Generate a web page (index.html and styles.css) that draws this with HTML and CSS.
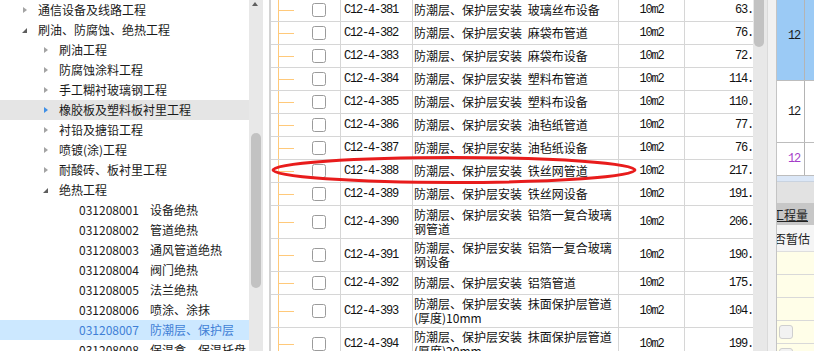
FILE: index.html
```html
<!DOCTYPE html>
<html lang="zh-CN">
  <head>
    <meta charset="UTF-8" />
    <meta name="viewport" content="width=device-width, initial-scale=1.0" />
    <title>定额选择</title>
    <link rel="stylesheet" href="styles.css">
  </head>
  <body>
    <div class="app">
      <!-- arbre des chapitres -->
      <div class="tree">
        <div class="node l1"><span class="ab"><i class="arr shut"></i></span><span>通信设备及线路工程</span></div>
        <div class="node l1"><span class="ab"><i class="arr open"></i></span><span>刷油、防腐蚀、绝热工程</span></div>
        <div class="node l2"><span class="ab"><i class="arr shut"></i></span><span>刷油工程</span></div>
        <div class="node l2"><span class="ab"><i class="arr shut"></i></span><span>防腐蚀涂料工程</span></div>
        <div class="node l2"><span class="ab"><i class="arr shut"></i></span><span>手工糊衬玻璃钢工程</span></div>
        <div class="node l2 hover"><span class="ab"><i class="arr shut"></i></span><span>橡胶板及塑料板衬里工程</span></div>
        <div class="node l2"><span class="ab"><i class="arr shut"></i></span><span>衬铅及搪铅工程</span></div>
        <div class="node l2"><span class="ab"><i class="arr shut"></i></span><span>喷镀(涂)工程</span></div>
        <div class="node l2"><span class="ab"><i class="arr shut"></i></span><span>耐酸砖、板衬里工程</span></div>
        <div class="node l2"><span class="ab"><i class="arr open"></i></span><span>绝热工程</span></div>
        <div class="node l3"><span class="code">031208001</span><span>设备绝热</span></div>
        <div class="node l3"><span class="code">031208002</span><span>管道绝热</span></div>
        <div class="node l3"><span class="code">031208003</span><span>通风管道绝热</span></div>
        <div class="node l3"><span class="code">031208004</span><span>阀门绝热</span></div>
        <div class="node l3"><span class="code">031208005</span><span>法兰绝热</span></div>
        <div class="node l3"><span class="code">031208006</span><span>喷涂、涂抹</span></div>
        <div class="node l3 sel"><span class="code">031208007</span><span>防潮层、保护层</span></div>
        <div class="node l3"><span class="code">031208008</span><span>保温盒、保温托盘</span></div>
      </div>
      <div class="vscroll">
        <i class="up"></i>
        <i class="thumb"></i>
      </div>
      <div class="gap"></div>

      <!-- liste des sous-articles -->
      <div class="grid">
        <div class="rows">
          <div class="row"><div class="c c1"><i class="stub"></i><i class="chk"></i></div><div class="c c2">C12-4-381</div><div class="c c3">防潮层、保护层安装 玻璃丝布设备</div><div class="c c4">10m2</div><div class="c c5">63.28</div></div>
          <div class="row"><div class="c c1"><i class="stub"></i><i class="chk"></i></div><div class="c c2">C12-4-382</div><div class="c c3">防潮层、保护层安装 麻袋布管道</div><div class="c c4">10m2</div><div class="c c5">76.14</div></div>
          <div class="row"><div class="c c1"><i class="stub"></i><i class="chk"></i></div><div class="c c2">C12-4-383</div><div class="c c3">防潮层、保护层安装 麻袋布设备</div><div class="c c4">10m2</div><div class="c c5">72.06</div></div>
          <div class="row"><div class="c c1"><i class="stub"></i><i class="chk"></i></div><div class="c c2">C12-4-384</div><div class="c c3">防潮层、保护层安装 塑料布管道</div><div class="c c4">10m2</div><div class="c c5">114.23</div></div>
          <div class="row"><div class="c c1"><i class="stub"></i><i class="chk"></i></div><div class="c c2">C12-4-385</div><div class="c c3">防潮层、保护层安装 塑料布设备</div><div class="c c4">10m2</div><div class="c c5">110.17</div></div>
          <div class="row"><div class="c c1"><i class="stub"></i><i class="chk"></i></div><div class="c c2">C12-4-386</div><div class="c c3">防潮层、保护层安装 油毡纸管道</div><div class="c c4">10m2</div><div class="c c5">77.12</div></div>
          <div class="row"><div class="c c1"><i class="stub"></i><i class="chk"></i></div><div class="c c2">C12-4-387</div><div class="c c3">防潮层、保护层安装 油毡纸设备</div><div class="c c4">10m2</div><div class="c c5">76.05</div></div>
          <div class="row"><div class="c c1"><i class="stub"></i><i class="chk"></i></div><div class="c c2">C12-4-388</div><div class="c c3">防潮层、保护层安装 铁丝网管道</div><div class="c c4">10m2</div><div class="c c5">217.11</div></div>
          <div class="row"><div class="c c1"><i class="stub"></i><i class="chk"></i></div><div class="c c2">C12-4-389</div><div class="c c3">防潮层、保护层安装 铁丝网设备</div><div class="c c4">10m2</div><div class="c c5">191.59</div></div>
          <div class="row"><div class="c c1"><i class="stub"></i><i class="chk"></i></div><div class="c c2">C12-4-390</div><div class="c c3">防潮层、保护层安装 铝箔一复合玻璃钢管道</div><div class="c c4">10m2</div><div class="c c5">206.32</div></div>
          <div class="row"><div class="c c1"><i class="stub"></i><i class="chk"></i></div><div class="c c2">C12-4-391</div><div class="c c3">防潮层、保护层安装 铝箔一复合玻璃钢设备</div><div class="c c4">10m2</div><div class="c c5">190.06</div></div>
          <div class="row"><div class="c c1"><i class="stub"></i><i class="chk"></i></div><div class="c c2">C12-4-392</div><div class="c c3">防潮层、保护层安装 铝箔管道</div><div class="c c4">10m2</div><div class="c c5">175.31</div></div>
          <div class="row"><div class="c c1"><i class="stub"></i><i class="chk"></i></div><div class="c c2">C12-4-393</div><div class="c c3">防潮层、保护层安装 抹面保护层管道(厚度)10mm</div><div class="c c4">10m2</div><div class="c c5">104.32</div></div>
          <div class="row"><div class="c c1"><i class="stub"></i><i class="chk"></i></div><div class="c c2">C12-4-394</div><div class="c c3">防潮层、保护层安装 抹面保护层管道(厚度)20mm</div><div class="c c4">10m2</div><div class="c c5">199.06</div></div>
        </div>
      </div>
      <div class="vscroll2">
        <i class="thumb2"></i>
      </div>
      <div class="splitter"></div>

      <!-- panneau de droite -->
      <div class="side">
        <div class="s blue"><span class="v">12</span><span class="w"></span></div>
        <div class="s white"><span class="v">12</span><span class="w"></span></div>
        <div class="s mid"><span class="v purple">12</span><span class="w"></span></div>
        <div class="s strip"></div>
        <div class="s bar"></div>
        <div class="s head">工程量</div>
        <div class="s sub">否暂估</div>
        <div class="s yel"></div>
        <div class="s yel"></div>
        <div class="s yel"></div>
        <div class="s yel"><i class="chk2"></i></div>
        <div class="s yel"><i class="chk2"></i></div>
      </div>

      <!-- annotation -->
      <svg class="mark" width="814" height="351" viewBox="0 0 814 351">
        <ellipse cx="454" cy="170" rx="181" ry="12.5" fill="none" stroke="#e81c1c" stroke-width="3" />
      </svg>
    </div>
  </body>
</html>
```

FILE: styles.css
```css
body {
  margin: 0;
  overflow: hidden;
  background: #fff;
}
.app {
  position: relative;
  display: flex;
  width: 814px;
  height: 351px;
  overflow: hidden;
  font-family: "Noto Sans CJK SC", sans-serif;
  font-size: 12px;
  color: #1a1a1a;
}

/* arbre */
.tree {
  width: 249px;
  flex: none;
  overflow: hidden;
}
.node {
  display: flex;
  align-items: center;
  height: 20px;
  line-height: 20px;
  white-space: nowrap;
}
.l1 {
  padding-left: 22px;
}
.l2 {
  padding-left: 43px;
}
.l3 {
  padding-left: 79px;
}
.ab {
  display: flex;
  align-items: center;
  width: 16px;
  height: 20px;
}
.arr.shut {
  width: 0;
  height: 0;
  margin-left: 1px;
  border-left: 4px solid #a3a3a3;
  border-top: 3.5px solid transparent;
  border-bottom: 3.5px solid transparent;
}
.arr.open {
  width: 0;
  height: 0;
  margin-top: 1px;
  border-bottom: 5px solid #5e5e5e;
  border-left: 5px solid transparent;
}
.hover {
  background: #e5e5e5;
}
.hover .arr.shut {
  border-left-color: #3f8fe6;
}
.code {
  width: 71px;
}
.sel {
  background: #cce8ff;
  color: #3f7fd6;
}
.vscroll {
  width: 14px;
  flex: none;
  display: flex;
  flex-direction: column;
  background: #e8e8e8;
}
.up {
  width: 0;
  height: 0;
  margin: 2px 0 0 3px;
  border-bottom: 4px solid #5f5f5f;
  border-left: 3.5px solid transparent;
  border-right: 3.5px solid transparent;
}
.thumb {
  width: 10px;
  height: 155px;
  margin: 127px 0 0 2px;
  border-radius: 5px;
  background: #c2c2c2;
}
.gap {
  width: 6px;
  flex: none;
}

/* tableau */
.grid {
  width: 482px;
  flex: none;
  overflow: hidden;
  border-left: 2px solid #d3d3d3;
}
.rows {
  width: 500px;
  margin-top: -1px;
  background: linear-gradient(#ffc97a, #ffc97a) no-repeat 7px 0 / 1px 100%;
}
.row {
  display: grid;
  grid-template-columns: 70px 72px 206px 66px 86px;
  min-height: 22px;
  border-bottom: 1px solid #d6d6d6;
}
.c {
  box-sizing: border-box;
  display: flex;
  align-items: center;
  border-right: 1px solid #d6d6d6;
  white-space: nowrap;
}
.stub {
  width: 16px;
  height: 1px;
  margin-left: 7px;
  background: #ffc97a;
}
.chk {
  box-sizing: border-box;
  width: 14px;
  height: 14px;
  margin-left: 18px;
  border: 1.5px solid #9b9b9b;
  border-radius: 2.5px;
  background: #fff;
}
.c2,
.c4,
.c5 {
  font-family: "Liberation Mono", monospace;
  font-size: 12px;
  letter-spacing: -1.2px;
  color: #111;
}
.c2 {
  padding-left: 3px;
}
.c3 {
  padding: 2px 2px 2px 1px;
  line-height: 14px;
  white-space: normal;
  word-spacing: 3px;
  color: #111;
}
.c4 {
  justify-content: center;
}
.c5 {
  justify-content: flex-end;
  padding-right: 6px;
  border-right: none;
}
.vscroll2 {
  width: 14px;
  flex: none;
  background: #e8e8e8;
}
.thumb2 {
  display: block;
  width: 10px;
  height: 52px;
  margin: -5px 0 0 1px;
  border-radius: 5px;
  background: #c2c2c2;
}
.splitter {
  box-sizing: border-box;
  width: 10px;
  flex: none;
  background: #f1f1f1;
  border-left: 1px solid #dadada;
  border-right: 1px solid #c4c4c4;
}

/* panneau droit */
.side {
  width: 37px;
  flex: none;
  display: flex;
  flex-direction: column;
  overflow: hidden;
}
.s {
  display: flex;
  flex: none;
  border-bottom: 1px solid #bdbdbd;
  white-space: nowrap;
}
.v {
  box-sizing: border-box;
  width: 28px;
  display: flex;
  align-items: center;
  justify-content: flex-end;
  padding-right: 4px;
  border-right: 1px solid #b4b4b4;
  font-family: "Liberation Mono", monospace;
  letter-spacing: -1.2px;
}
.w {
  flex: 1;
}
.blue {
  height: 88px;
  margin-top: -8px;
  background: #9bcaf5;
}
.white {
  height: 61px;
}
.mid {
  height: 32px;
}
.purple {
  color: #a43cc8;
}
.strip {
  height: 5px;
  background: #dbe7f7;
  border-bottom-color: #c9d3e0;
}
.bar {
  height: 21px;
  background: #e2e2e2;
  border-bottom: none;
}
.head {
  height: 22px;
  align-items: center;
  margin-left: -5px;
  background: #c7c7c7;
  color: #222;
  text-decoration: underline;
  border-bottom: none;
}
.sub {
  height: 26px;
  align-items: center;
  margin-left: -3px;
  background: #f5f5f5;
  color: #222;
  border-bottom: 1px solid #dedede;
}
.yel {
  height: 22px;
  align-items: center;
  background: #fffee8;
  border-bottom: 1px solid #d9d9d9;
}
.chk2 {
  box-sizing: border-box;
  width: 14px;
  height: 14px;
  margin-left: 2px;
  border: 1px solid #cfcfcf;
  border-radius: 3px;
  background: #f2f2f2;
}

.mark {
  position: absolute;
  left: 0;
  top: 0;
  pointer-events: none;
}
```
